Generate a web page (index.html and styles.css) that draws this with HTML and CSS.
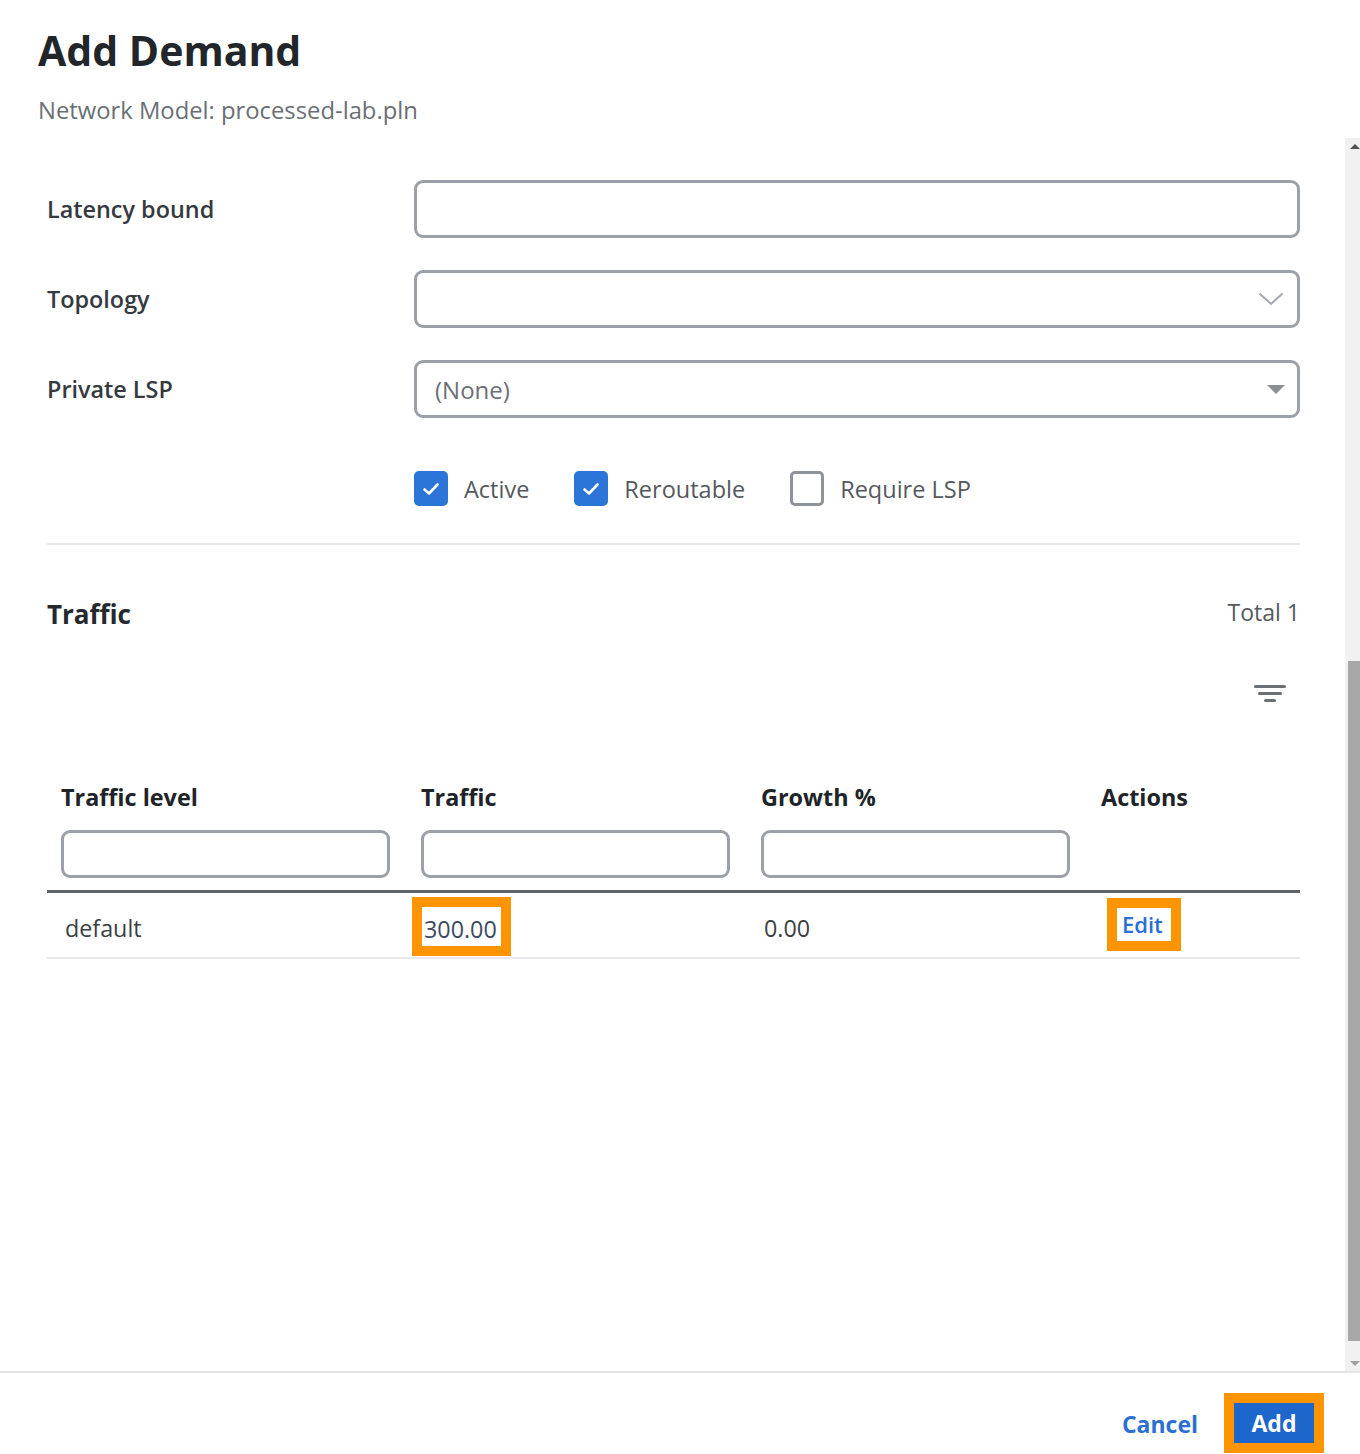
FILE: index.html
```html
<!DOCTYPE html>
<html lang="en">
<head>
<meta charset="utf-8">
<title>Add Demand</title>
<link rel="stylesheet" href="styles.css">
</head>
<body>
<div class="dialog">
  <header class="head">
    <h1 class="title">Add Demand</h1>
    <p class="subtitle">Network Model: processed-lab.pln</p>
  </header>
  <div class="body">
    <div class="content">
      <div class="form">
        <label class="label">Latency bound</label>
        <div class="field"></div>
        <label class="label">Topology</label>
        <div class="field select">
          <svg class="chevron" width="26" height="14" viewBox="0 0 26 14"><path d="M1.5 1.5 L13 12 L24.5 1.5" fill="none" stroke="#a3a8ad" stroke-width="2"/></svg>
        </div>
        <label class="label">Private LSP</label>
        <div class="field select">
          <span class="placeholder">(None)</span>
          <svg class="caret" width="18" height="9" viewBox="0 0 18 9"><path d="M0 0 H18 L9 9 Z" fill="#8a8f94"/></svg>
        </div>
      </div>
      <div class="checks">
        <label class="check"><span class="box on"><svg width="18" height="14" viewBox="0 0 18 14"><path d="M2.5 7.5 L7 11.5 L15.5 2.5" fill="none" stroke="#fff" stroke-width="2.6" stroke-linecap="round" stroke-linejoin="round"/></svg></span>Active</label>
        <label class="check"><span class="box on"><svg width="18" height="14" viewBox="0 0 18 14"><path d="M2.5 7.5 L7 11.5 L15.5 2.5" fill="none" stroke="#fff" stroke-width="2.6" stroke-linecap="round" stroke-linejoin="round"/></svg></span>Reroutable</label>
        <label class="check"><span class="box"></span>Require LSP</label>
      </div>
      <div class="divider"></div>
      <div class="section-head">
        <h2 class="section-title">Traffic</h2>
        <span class="total">Total 1</span>
      </div>
      <div class="toolbar">
        <svg width="32" height="17" viewBox="0 0 32 17"><rect x="0" y="0" width="32" height="3" rx="1.5" fill="#6b7075"/><rect x="4" y="7" width="24" height="3" rx="1.5" fill="#6b7075"/><rect x="10" y="14" width="12" height="3" rx="1.5" fill="#6b7075"/></svg>
      </div>
      <div class="table">
        <div class="thead">
          <div class="th"><div class="th-label">Traffic level</div><div class="th-input"></div></div>
          <div class="th"><div class="th-label">Traffic</div><div class="th-input"></div></div>
          <div class="th"><div class="th-label">Growth %</div><div class="th-input"></div></div>
          <div class="th"><div class="th-label">Actions</div></div>
        </div>
        <div class="trow">
          <div class="td first">default</div>
          <div class="td"><span class="mark num">300.00</span></div>
          <div class="td">0.00</div>
          <div class="td action"><span class="mark edit">Edit</span></div>
        </div>
      </div>
    </div>
    <div class="scrollbar">
      <div class="arrow up"></div>
      <div class="track"><div class="thumb" style="margin-top: 507px; height: 680px;"></div></div>
      <div class="arrow down"></div>
    </div>
  </div>
  <footer class="foot">
    <button class="btn-cancel">Cancel</button>
    <span class="add-mark"><button class="btn-add">Add</button></span>
  </footer>
</div>
</body>
</html>
```
FILE: styles.css
```css
* { box-sizing: border-box; }
html, body { margin: 0; padding: 0; background: #fff; }
body { font-family: "Open Sans", "Noto Sans", sans-serif; color: #333; }

.dialog {
  width: 1360px;
  height: 1454px;
  display: flex;
  flex-direction: column;
  overflow: hidden;
}

.head {
  height: 138px;
  flex: none;
  padding: 24px 38px 0;
}
.title {
  margin: 0;
  font-size: 41px;
  line-height: 52px;
  font-weight: 700;
  color: #22262b;
}
.subtitle {
  margin: 19px 0 0;
  font-size: 23.8px;
  line-height: 30px;
  color: #6a6f75;
}

.body {
  flex: 1;
  display: flex;
  min-height: 0;
}
.content {
  flex: 1;
  padding: 42px 45px 0 47px;
}

.form {
  display: grid;
  grid-template-columns: 367px 1fr;
  row-gap: 32px;
  align-items: center;
}
.label {
  font-size: 23.4px;
  font-weight: 600;
  color: #363a3f;
}
.field {
  height: 58px;
  border: 3px solid #9ba1a7;
  border-radius: 9px;
  display: flex;
  align-items: center;
  padding: 0 12px 0 18px;
}
.select { justify-content: space-between; }
.chevron { margin-left: auto; margin-right: 1px; }
.caret { margin-right: 0; }
.placeholder { font-size: 24px; color: #6c7075; }

.checks {
  margin: 53px 0 0 367px;
  display: flex;
  gap: 45px;
  height: 35px;
}
.check {
  display: flex;
  align-items: center;
  gap: 16px;
  font-size: 23.5px;
  color: #55595e;
}
.box {
  width: 34px;
  height: 35px;
  border-radius: 5px;
  border: 3px solid #8e9399;
  display: flex;
  align-items: center;
  justify-content: center;
}
.box.on { background: #2b74d8; border-color: #2b74d8; }

.divider {
  margin-top: 37px;
  height: 2px;
  background: #e6e6e6;
}

.section-head {
  margin-top: 51px;
  display: flex;
  justify-content: space-between;
  align-items: center;
  height: 36px;
}
.section-title {
  margin: 0;
  font-size: 26px;
  font-weight: 700;
  color: #25292e;
}
.total {
  font-size: 23px;
  color: #55595e;
  margin-top: -4px;
}

.toolbar {
  margin-top: 53px;
  height: 17px;
  display: flex;
  justify-content: flex-end;
  padding-right: 14px;
}

.table { margin-top: 80px; }
.thead {
  display: grid;
  grid-template-columns: 360px 340px 340px 1fr;
  border-bottom: 3px solid #5f6368;
  padding-bottom: 12px;
}
.th { padding-left: 14px; padding-right: 17px; }
.th-label {
  font-size: 23.4px;
  line-height: 30px;
  font-weight: 700;
  color: #202428;
}
.th-input {
  margin-top: 18px;
  height: 48px;
  border: 3px solid #9ba1a7;
  border-radius: 9px;
}
.trow {
  display: grid;
  grid-template-columns: 360px 340px 340px 1fr;
  height: 66px;
  border-bottom: 2px solid #e8e9ed;
  align-items: center;
}
.td {
  padding-left: 17px;
  padding-top: 6px;
  font-size: 23.3px;
  color: #3b3f44;
}
.td.first { padding-left: 18px; }
.mark {
  display: inline-block;
  border: 10px solid #fd9400;
  background: #fff;
}
.num {
  margin-left: -12px;
  margin-top: -4px;
  padding: 5px 4px 0 2px;
  line-height: 34px;
  color: #3b4a60;
}
.td.action { padding-left: 20px; padding-top: 0; }
.edit {
  margin-top: -2px;
  padding: 0 8px 0 5px;
  line-height: 33px;
  font-size: 22px;
  font-weight: 600;
  color: #2a6fd6;
}

.scrollbar {
  width: 15px;
  flex: none;
  background: #f1f1f1;
  display: flex;
  flex-direction: column;
}
.arrow { height: 16px; display: flex; justify-content: center; align-items: center; }
.arrow::before {
  content: "";
  width: 0;
  height: 0;
  border-left: 5px solid transparent;
  border-right: 5px solid transparent;
}
.arrow.up::before { border-bottom: 5px solid #505050; margin-left: 4px; }
.arrow.down::before { border-top: 5px solid #a0a0a0; margin-left: 4px; }
.track { flex: 1; padding-left: 3px; }
.thumb { background: #a8a8a8; }

.foot {
  height: 83px;
  flex: none;
  border-top: 2px solid #e4e4e4;
  display: flex;
  justify-content: flex-end;
  align-items: flex-start;
  padding: 20px 36px 0 0;
  gap: 26px;
}
.btn-cancel {
  margin-top: 15px;
  border: 0;
  background: none;
  padding: 0;
  font-family: inherit;
  font-size: 23px;
  font-weight: 700;
  color: #2b70d0;
}
.add-mark {
  display: inline-block;
  border: 10px solid #fd9400;
}
.btn-add {
  display: block;
  width: 80px;
  height: 40px;
  border: 0;
  background: #1d66cc;
  color: #fff;
  font-family: inherit;
  font-size: 23px;
  font-weight: 700;
  padding: 0;
}
```
